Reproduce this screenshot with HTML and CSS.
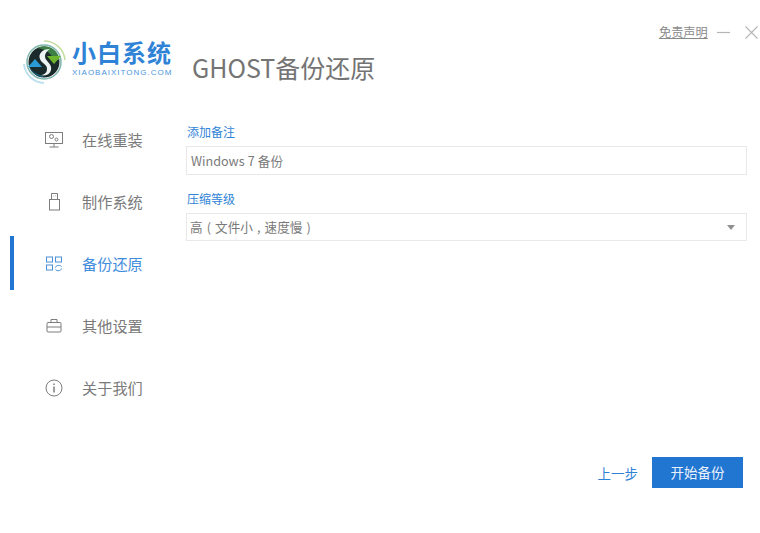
FILE: index.html
```html
<!DOCTYPE html>
<html lang="zh-CN">
<head>
<meta charset="utf-8">
<title>GHOST备份还原</title>
<link rel="stylesheet" href="styles.css">
</head>
<body>
<div class="app">
  <div class="topbar">
    <a class="disclaimer">免责声明</a>
    <svg class="win-icon min" width="13" height="13" viewBox="0 0 13 13"><path d="M0 6.5H13" stroke="#b5b5b5" stroke-width="1.2"/></svg>
    <svg class="win-icon" width="13" height="13" viewBox="0 0 13 13"><path d="M.5.5l12 12M12.5.5l-12 12" stroke="#b5b5b5" stroke-width="1.1"/></svg>
  </div>
  <header class="header">
    <div class="logo">
      <svg class="logo-mark" width="44" height="44" viewBox="0 0 44 44">
        <path d="M21 1A21 21 0 0 1 42 20" fill="none" stroke="#c5dca0" stroke-width="1.500"/>
        <path d="M21 43A21 21 0 0 1 1 24" fill="none" stroke="#bfe0ee" stroke-width="2"/>
        <circle cx="21" cy="22" r="17" fill="none" stroke="#7fb6ae" stroke-width="1.500"/>
        <circle cx="21" cy="22" r="15.500" fill="#1b2a2a"/>
        <path d="M14 8A15.500 15.500 0 0 1 36.500 20L30 20C29 13 22 9 14 8Z" fill="#3d8046"/>
        <path d="M6 24C7 31 14 35 23 37A15.500 15.500 0 0 1 5.500 22Z" fill="#15637f"/>
        <path d="M27 9C19 9 15 14 17 19C19 24 24 24 24 29C24 33 21 35 17 35C25 37 29 32 28 27C27 22 22 21 22 16C22 13 24 11 27 9Z" fill="#eef3f3"/>
        <path d="M24 16H38L31 24Z" fill="#6cb52d"/>
        <path d="M5 27H19L12 19Z" fill="#2b9bd6"/>
      </svg>
      <div class="logo-text">
        <div class="logo-name">小白系统</div>
        <div class="logo-sub">XIAOBAIXITONG.COM</div>
      </div>
    </div>
    <h1 class="title">GHOST备份还原</h1>
  </header>
  <div class="content">
    <nav class="nav">
      <a class="nav-item">
        <svg class="nav-icon" width="18" height="16" viewBox="0 0 18 16" fill="none" stroke="#7d7d7d"><rect x=".5" y=".5" width="17" height="11"/><path d="M9 11.500V15M4.500 15H13.500"/><circle cx="6.500" cy="4.500" r="2"/><circle cx="11.500" cy="7.500" r="1.500"/></svg>
        <span>在线重装</span>
      </a>
      <a class="nav-item">
        <svg class="nav-icon" width="18" height="18" viewBox="0 0 18 18" fill="none" stroke="#7d7d7d"><rect x="4.500" y="6.500" width="10" height="10.500"/><path d="M6.500 6.500V.5H12.500V6.500M8 3H8.500M10.500 3H11"/></svg>
        <span>制作系统</span>
      </a>
      <a class="nav-item active">
        <svg class="nav-icon" width="18" height="16" viewBox="0 0 18 16" fill="none" stroke="#4a90d9"><rect x="1.500" y="1" width="6" height="5"/><rect x="1.500" y="9" width="6" height="5"/><rect x="10.500" y="1" width="6" height="5"/><path d="M10.500 11.500C10.500 9.500 14.500 8.500 16.500 10.500M16.500 12.500C16 15 12 15.500 10.500 13.500"/></svg>
        <span>备份还原</span>
      </a>
      <a class="nav-item">
        <svg class="nav-icon" width="18" height="16" viewBox="0 0 18 16" fill="none" stroke="#7d7d7d"><rect x="2" y="4.500" width="14" height="9.500" rx="1"/><path d="M6 4.500V1.500H12V4.500M2 9H16"/></svg>
        <span>其他设置</span>
      </a>
      <a class="nav-item">
        <svg class="nav-icon" width="18" height="18" viewBox="0 0 18 18" fill="none" stroke="#7d7d7d"><circle cx="9" cy="9" r="8"/><path d="M9 7.500V13.500" stroke-width="1.500"/><path d="M9 4.500V6" stroke-width="1.500"/></svg>
        <span>关于我们</span>
      </a>
    </nav>
    <main class="main">
      <div class="form">
        <div class="field">
          <label class="field-label">添加备注</label>
          <div class="control">Windows 7 备份</div>
        </div>
        <div class="field">
          <label class="field-label">压缩等级</label>
          <div class="control select">
            <span class="select-value">高 ( 文件小 , 速度慢 )</span>
            <i class="caret"></i>
          </div>
        </div>
      </div>
      <div class="actions">
        <a class="back">上一步</a>
        <button class="primary">开始备份</button>
      </div>
    </main>
  </div>
</div>
</body>
</html>
```
FILE: styles.css
```css
* { box-sizing: border-box; }
html, body { margin: 0; height: 100%; background: #fff; overflow: hidden; }
body { font-family: "Noto Sans CJK SC", "Open Sans", sans-serif; color: #7a7a7a; }
.app { width: 760px; height: 533px; display: flex; flex-direction: column; }

.topbar { display: flex; justify-content: flex-end; align-items: center; height: 18px; margin-top: 23px; padding-right: 2px; }
.disclaimer { font-size: 12.200px; line-height: 18px; color: #8a8a8a; text-decoration: underline; width: 50px; white-space: nowrap; }
.win-icon { margin-left: 15px; }
.win-icon.min { margin-left: 8px; }

.header { display: flex; align-items: center; height: 46px; padding-left: 23px; }
.logo { display: flex; align-items: flex-start; gap: 5px; margin-top: -5px; }
.logo-text { width: 105px; margin-top: -2px; }
.logo-name { font-size: 24px; line-height: 28px; font-weight: 700; color: #2f83d6; letter-spacing: 1px; white-space: nowrap; }
.logo-sub { font-family: "Liberation Sans", sans-serif; font-size: 8px; line-height: 10px; color: #4b96dd; letter-spacing: 1px; margin-top: 2px; white-space: nowrap; }
.title { margin: 6px 0 0 15px; font-size: 25px; line-height: 34px; font-weight: 400; color: #747474; white-space: nowrap; }

.content { flex: 1; display: flex; min-height: 0; margin-top: 16px; }
.nav { width: 186px; padding-top: 9px; padding-left: 10px; flex: none; }
.nav-item { display: flex; align-items: center; height: 54px; margin-bottom: 8px; padding-left: 29px; border-left: 4px solid transparent; font-size: 15.200px; color: #7a7a7a; }
.nav-item.active { border-left-color: #2176d2; color: #3f8ddc; }
.nav-icon { flex: none; margin: 1px 19px 0 2px; }

.main { flex: 1; display: flex; flex-direction: column; justify-content: space-between; padding: 20px 13px 45px 0; }
.form { display: flex; flex-direction: column; gap: 15px; }
.field-label { display: block; font-size: 12px; line-height: 18px; color: #2f83d6; margin-left: 1px; margin-bottom: 5px; }
.control { height: 29px; border: 1px solid #e8e8e8; padding: 0 4px; font-size: 12.600px; line-height: 27px; color: #7a7a7a; display: flex; align-items: center; justify-content: space-between; word-spacing: 0.3px; }
.select { height: 28px; padding-left: 3px; padding-right: 11px; }
.select-value { word-spacing: 1.300px; margin-top: -2px; }
.caret { width: 0; height: 0; border-left: 4px solid transparent; border-right: 4px solid transparent; border-top: 5px solid #909090; }

.actions { display: flex; justify-content: flex-end; align-items: center; gap: 14px; padding-right: 4px; }
.back { font-size: 13.500px; color: #2f83d6; }
.primary { width: 91px; height: 31px; border: 0; background: #2176d2; color: #e8f1fb; font-family: inherit; font-size: 13.500px; padding: 0 0 2px; }
```
